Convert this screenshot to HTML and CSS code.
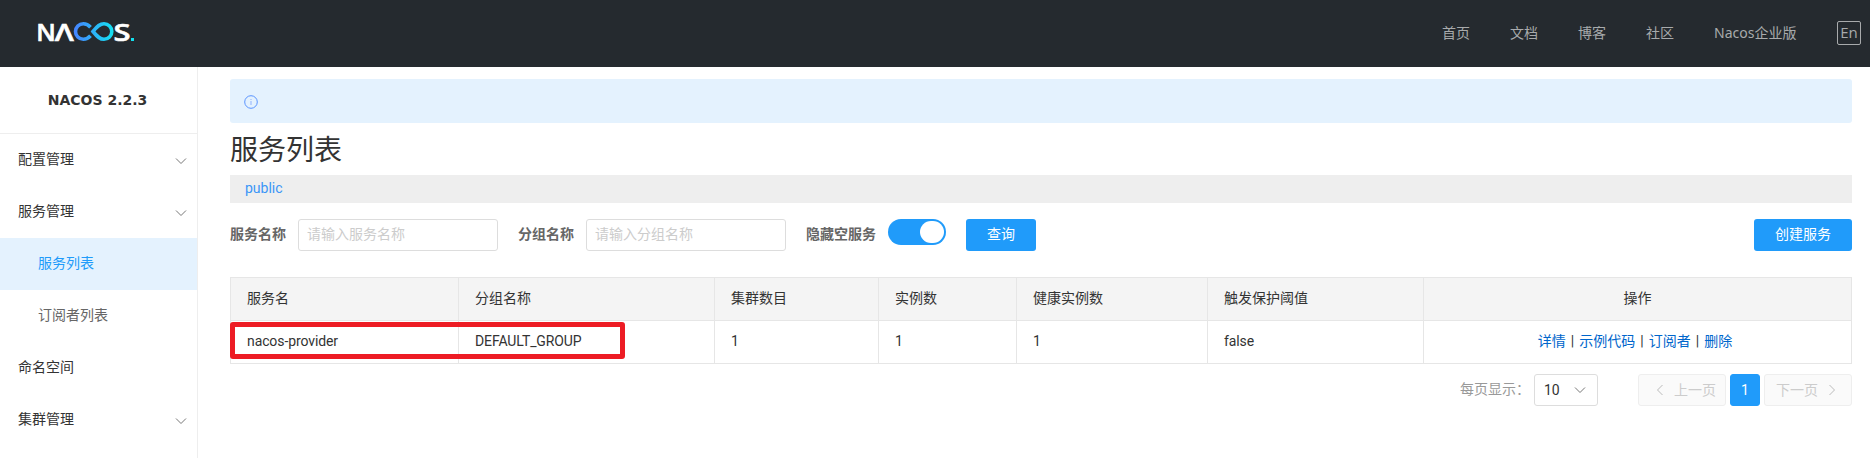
FILE: index.html
```html
<!DOCTYPE html>
<html lang="zh-CN">
<head>
<meta charset="utf-8">
<title>Nacos</title>
<link rel="stylesheet" href="styles.css">
</head>
<body>
<header class="header">
  <svg class="logo" width="104" height="48" viewBox="-2 -12 104 48">
    <defs>
      <linearGradient id="g" gradientUnits="userSpaceOnUse" x1="38" y1="0" x2="78" y2="0">
        <stop offset="0" stop-color="#4585ff"/><stop offset="1" stop-color="#12e5f0"/>
      </linearGradient>
    </defs>
    <text class="logo-text" x="-0.800" y="20.500" textLength="19.500" lengthAdjust="spacingAndGlyphs">N</text>
    <text class="logo-text" x="17.800" y="20.500" textLength="19" lengthAdjust="spacingAndGlyphs">Λ</text>
    <path d="M53.500 7.200C51 4.300 49 3.700 46.300 3.700a7.800 7.800 0 0 0 0 15.600C49 19.300 51 18.700 53.500 15.800M56 11.500C60.500 6 63 3.700 67 3.700a7.800 7.800 0 0 1 0 15.600C63 19.300 60.500 17 56 11.500Z" fill="none" stroke="url(#g)" stroke-width="3.600"/>
    <text class="logo-text" x="76.500" y="20.500" textLength="17" lengthAdjust="spacingAndGlyphs">S</text>
    <rect x="94" y="18" width="3" height="3" fill="#12e0ef"/>
  </svg>
  <nav class="nav">
    <a>首页</a><a>文档</a><a>博客</a><a>社区</a><a class="ent">Nacos企业版</a>
    <span class="lang">En</span>
  </nav>
</header>
<div class="body">
  <aside class="side">
    <h1 class="version">NACOS 2.2.3</h1>
    <ul class="menu">
      <li>配置管理<svg class="chev" viewBox="0 0 12 8"><path d="M1 1.500l5 5 5-5"/></svg></li>
      <li>服务管理<svg class="chev" viewBox="0 0 12 8"><path d="M1 1.500l5 5 5-5"/></svg></li>
      <li class="sub active">服务列表</li>
      <li class="sub">订阅者列表</li>
      <li>命名空间</li>
      <li>集群管理<svg class="chev" viewBox="0 0 12 8"><path d="M1 1.500l5 5 5-5"/></svg></li>
    </ul>
  </aside>
  <main class="main">
    <div class="notice">
      <svg width="14" height="14" viewBox="0 0 14 14" fill="none" stroke="#5a94ff"><circle cx="7" cy="7" r="6.300"/><path d="M7 6v4M7 4v1" stroke="#8fb2ff"/></svg>
    </div>
    <h2 class="title">服务列表</h2>
    <div class="ns">public</div>
    <form class="form">
      <label>服务名称</label><input class="input" placeholder="请输入服务名称">
      <label>分组名称</label><input class="input" placeholder="请输入分组名称">
      <label>隐藏空服务</label><span class="switch"></span>
      <button type="button" class="btn">查询</button>
      <button type="button" class="btn create">创建服务</button>
    </form>
    <div class="table-wrap">
      <table class="table">
        <colgroup><col class="c1"><col class="c2"><col class="c3"><col class="c4"><col class="c5"><col class="c6"><col class="c7"></colgroup>
        <tr><th>服务名</th><th>分组名称</th><th>集群数目</th><th>实例数</th><th>健康实例数</th><th>触发保护阈值</th><th class="ops">操作</th></tr>
        <tr><td>nacos-provider</td><td>DEFAULT_GROUP</td><td>1</td><td>1</td><td>1</td><td>false</td>
          <td class="ops links"><a>详情</a><i>|</i><a>示例代码</a><i>|</i><a>订阅者</a><i>|</i><a>删除</a></td></tr>
      </table>
      <div class="mark"></div>
    </div>
    <div class="pager">
      <span class="size-label">每页显示：</span>
      <span class="select">10<svg class="chev" viewBox="0 0 12 8"><path d="M1 1.500l5 5 5-5"/></svg></span>
      <span class="page prev"><svg width="8" height="12" viewBox="0 0 8 12"><path d="M6.500 1l-5 5 5 5"/></svg>上一页</span>
      <span class="page current">1</span>
      <span class="page next">下一页<svg width="8" height="12" viewBox="0 0 8 12"><path d="M1.500 1l5 5-5 5"/></svg></span>
    </div>
  </main>
</div>
</body>
</html>
```
FILE: styles.css
```css
* { box-sizing: border-box; }
body {
  margin: 0;
  height: 458px;
  overflow: hidden;
  background: #fff;
  color: #333;
  font: 14px/20px Roboto, "Noto Sans CJK SC", sans-serif;
}
.header {
  display: flex;
  justify-content: space-between;
  height: 67px;
  padding: 0 9px 0 35px;
  background: #252a2f;
}
.logo { margin-top: 8px; }
.logo-text {
  font: 600 24px "Open Sans", sans-serif;
  fill: #fff;
  stroke: #fff;
  stroke-width: .6px;
}
.nav {
  display: flex;
  gap: 40px;
  padding-top: 23px;
  color: #a8aaac;
  font-family: "Noto Sans", "Noto Sans CJK SC", sans-serif;
}
.ent { width: 83px; white-space: nowrap; }
.lang {
  width: 24px;
  height: 24px;
  margin-top: -2px;
  border: 1px solid #a8aaac;
  border-radius: 2px;
  font: 15px/20px "Open Sans", sans-serif;
  text-align: center;
}
.body { display: flex; height: 391px; }
.side { width: 198px; border-right: 1px solid #eee; }
.version {
  height: 67px;
  margin: 0;
  padding-right: 2px;
  border-bottom: 1px solid #eee;
  font: 600 14px/66px "DejaVu Sans", sans-serif;
  text-align: center;
}
.menu { margin: 0; padding: 0; list-style: none; }
.menu li {
  display: flex;
  align-items: center;
  justify-content: space-between;
  height: 52px;
  padding: 0 10px 2px 18px;
}
.menu .sub { padding-left: 38px; color: #666; }
.menu .active { background: #e4f2fe; color: #209bfa; }
.chev { width: 12px; height: 8px; fill: none; stroke: #777; }
.menu .chev { margin-top: 3px; }
.main { flex: 1; padding: 12px 18px 0 32px; }
.notice {
  display: flex;
  align-items: center;
  height: 44px;
  padding: 2px 14px 0;
  border-radius: 3px;
  background: #e4f2fe;
}
.title { height: 52px; margin: 0; font-size: 28px; font-weight: 400; line-height: 55px; }
.ns { height: 28px; padding-left: 15px; background: #eee; color: #3b96f7; line-height: 27px; }
.form { display: flex; height: 58px; padding-top: 16px; }
.form label { margin-right: 12px; color: #666; font-weight: 600; line-height: 30px; }
.input {
  width: 200px;
  height: 32px;
  margin-right: 20px;
  padding: 0 8px 2px;
  border: 1px solid #ddd;
  border-radius: 3px;
  font: inherit;
}
.input::placeholder { color: #ccc; }
.switch {
  width: 58px;
  height: 26px;
  margin-right: 20px;
  padding: 2px;
  border-radius: 13px;
  background: #209bfa;
}
.switch::after {
  content: "";
  display: block;
  width: 24px;
  height: 22px;
  margin-left: auto;
  border-radius: 12px;
  background: #fff;
}
.btn {
  width: 70px;
  height: 32px;
  padding: 0 0 2px;
  border: 0;
  border-radius: 3px;
  background: #209bfa;
  color: #fff;
  font: inherit;
}
.create { width: 98px; margin-left: auto; }
.table-wrap { position: relative; margin-top: 16px; }
.table {
  width: 1622px;
  border-collapse: separate;
  border-spacing: 0;
  border: solid #e6e6e6;
  border-width: 1px 0 0 1px;
  table-layout: fixed;
}
.table th, .table td {
  height: 43px;
  padding: 0 16px 2px;
  border: solid #e6e6e6;
  border-width: 0 1px 1px 0;
  font-weight: 400;
  text-align: left;
}
.table td { letter-spacing: -.1px; }
.table th { background: #f4f4f4; }
.table .ops { text-align: center; letter-spacing: 0; }
.table .links { padding-right: 21px; }
.c1 { width: 228px; }
.c2 { width: 256px; }
.c3 { width: 164px; }
.c4 { width: 138px; }
.c5 { width: 191px; }
.c6 { width: 216px; }
.ops a { color: #06c; }
.ops i { display: inline-block; width: 13.500px; font-style: normal; text-align: center; }
.mark {
  position: absolute;
  left: 0;
  top: 45px;
  width: 395px;
  height: 37px;
  border: 5px solid #ed1c24;
  border-radius: 3px;
}
.pager { display: flex; justify-content: flex-end; padding-top: 10px; line-height: 30px; }
.size-label { width: 74px; color: #999; white-space: nowrap; }
.select {
  display: flex;
  align-items: center;
  justify-content: space-between;
  width: 64px;
  height: 32px;
  margin-right: 40px;
  padding: 0 11px 0 9px;
  border: 1px solid #ddd;
  border-radius: 3px;
}
.page {
  display: flex;
  align-items: center;
  gap: 10px;
  width: 88px;
  height: 32px;
  border: 1px solid #eee;
  border-radius: 3px;
  background: #fafafa;
  color: #ccc;
  line-height: 28px;
}
.prev { padding: 0 0 1px 17px; }
.next { padding: 0 0 1px 11px; }
.page svg { fill: none; stroke: #bbb; margin-top: 1px; }
.current {
  justify-content: center;
  width: 30px;
  margin: 0 4px;
  border-color: #209bfa;
  background: #209bfa;
  color: #fff;
}
```
